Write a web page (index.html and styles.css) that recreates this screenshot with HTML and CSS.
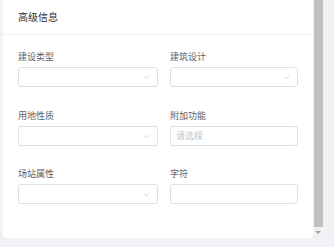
FILE: index.html
```html
<!DOCTYPE html>
<html lang="zh-CN">
<head>
  <meta charset="UTF-8" />
  <meta name="viewport" content="width=device-width, initial-scale=1.0"/>
  <title>高级信息</title>
  <link rel="stylesheet" href="styles.css">
</head>
<body>
  <div class="page">
    <div class="panel">
      <div class="panel-header">高级信息</div>

      <div class="panel-body">
        <div class="form-item">
          <label>建设类型</label>
          <div class="select">
            <svg class="arrow" viewBox="0 0 8 5"><path d="M1 1l3 3 3-3" /></svg>
          </div>
        </div>
        <div class="form-item right">
          <label>建筑设计</label>
          <div class="select">
            <svg class="arrow" viewBox="0 0 8 5"><path d="M1 1l3 3 3-3" /></svg>
          </div>
        </div>

        <div class="form-item">
          <label>用地性质</label>
          <div class="select">
            <svg class="arrow" viewBox="0 0 8 5"><path d="M1 1l3 3 3-3" /></svg>
          </div>
        </div>
        <div class="form-item right">
          <label>附加功能</label>
          <input type="text" placeholder="请选择" />
        </div>

        <div class="form-item">
          <label>场站属性</label>
          <div class="select">
            <svg class="arrow" viewBox="0 0 8 5"><path d="M1 1l3 3 3-3" /></svg>
          </div>
        </div>
        <div class="form-item right">
          <label>字符</label>
          <input type="text" />
        </div>
      </div>
    </div>

    <!-- scrollbar of the panel area -->
    <div class="scrollbar">
      <div class="thumb"></div>
      <div class="scroll-down"></div>
    </div>
  </div>
</body>
</html>
```

FILE: styles.css
```css
body {
  margin: 0;
  padding: 0;
  background-color: #f0f2f5;
  font-family: "Noto Sans CJK SC", "Noto Sans", sans-serif;
}

.page {
  display: flex;
  align-items: flex-start;
  padding-left: 3px;
  height: 247px;
  box-sizing: border-box;
}

.panel {
  width: 310px;
  height: 238px;
  background: #fff;
  border-radius: 0 0 4px 4px;
}

.panel-header {
  height: 34px;
  line-height: 34px;
  padding-left: 15px;
  font-size: 10px;
  color: #303133;
  border-bottom: 1px solid #ebeef5;
}

.panel-body {
  display: grid;
  grid-template-columns: 140px 140px;
  padding: 16px 15px 0;
}

.form-item {
  margin-bottom: 22.5px;
}

.form-item.right {
  padding-left: 12px;
}

label {
  display: block;
  font-size: 9px;
  line-height: 12px;
  color: #606266;
  margin-bottom: 4px;
}

.select,
input {
  position: relative;
  width: 100%;
  height: 20px;
  border: 1px solid #dcdfe6;
  border-radius: 3px;
  background: #fff;
  box-sizing: border-box;
}

input {
  display: block;
  margin: 0;
  padding: 0 5px;
  font-family: inherit;
  font-size: 9px;
  color: #606266;
  outline: none;
}

input::placeholder {
  color: #c0c4cc;
}

.arrow {
  position: absolute;
  right: 7px;
  top: 7px;
  width: 7px;
  height: 5px;
  fill: none;
  stroke: #c0c4cc;
  stroke-width: 0.8;
}

.scrollbar {
  width: 10px;
  height: 238px;
  background: #f1f1f1;
  display: flex;
  flex-direction: column;
  align-items: flex-end;
}

.thumb {
  width: 9px;
  height: 227px;
  background: #c1c1c1;
}

.scroll-down {
  width: 0;
  height: 0;
  margin: 4px 2px 0 0;
  border-left: 3px solid transparent;
  border-right: 3px solid transparent;
  border-top: 3px solid #a3a3a3;
}
```
